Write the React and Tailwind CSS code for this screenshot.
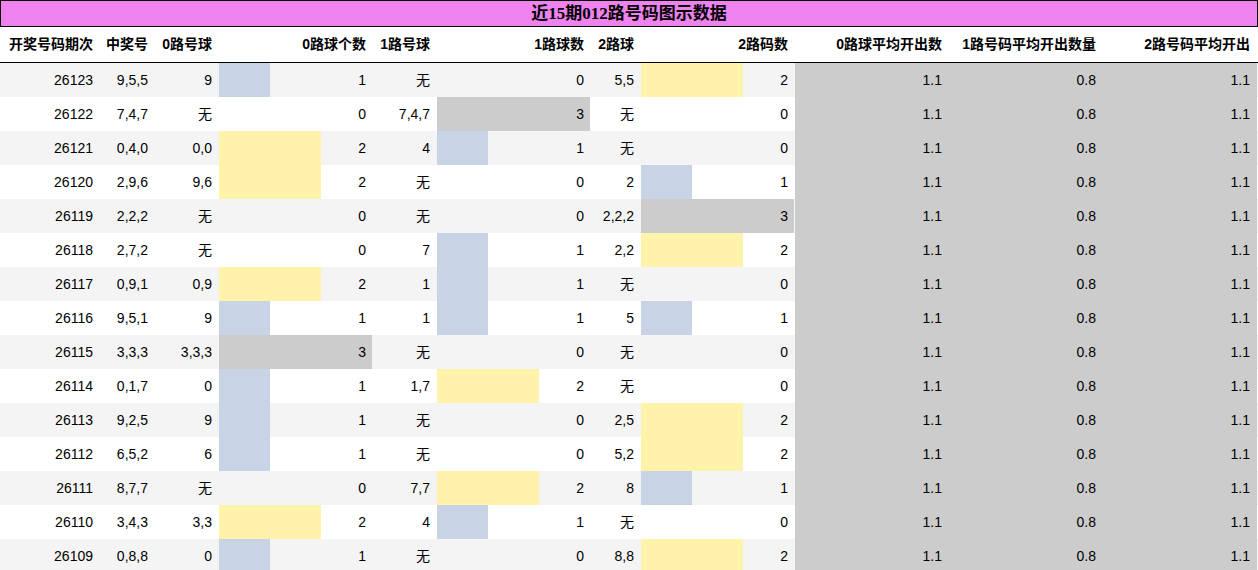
import React from "react";

const rows = [
  ["26123", "9,5,5", "9", 1, "无", 0, "5,5", 2],
  ["26122", "7,4,7", "无", 0, "7,4,7", 3, "无", 0],
  ["26121", "0,4,0", "0,0", 2, "4", 1, "无", 0],
  ["26120", "2,9,6", "9,6", 2, "无", 0, "2", 1],
  ["26119", "2,2,2", "无", 0, "无", 0, "2,2,2", 3],
  ["26118", "2,7,2", "无", 0, "7", 1, "2,2", 2],
  ["26117", "0,9,1", "0,9", 2, "1", 1, "无", 0],
  ["26116", "9,5,1", "9", 1, "1", 1, "5", 1],
  ["26115", "3,3,3", "3,3,3", 3, "无", 0, "无", 0],
  ["26114", "0,1,7", "0", 1, "1,7", 2, "无", 0],
  ["26113", "9,2,5", "9", 1, "无", 0, "2,5", 2],
  ["26112", "6,5,2", "6", 1, "无", 0, "5,2", 2],
  ["26111", "8,7,7", "无", 0, "7,7", 2, "8", 1],
  ["26110", "3,4,3", "3,3", 2, "4", 1, "无", 0],
  ["26109", "0,8,8", "0", 1, "无", 0, "8,8", 2],
];

const headers = [
  "开奖号码期次", "中奖号", "0路号球", "0路球个数", "1路号球", "1路球数",
  "2路球", "2路码数", "0路球平均开出数", "1路号码平均开出数量", "2路号码平均开出",
];

const cols = "grid-cols-[100px_55px_64px_154px_64px_154px_50px_154px_154px_154px_154px]";

const barColor = ["", "bg-[#c9d3e6]", "bg-[#fff2aa]", "bg-[#cccccc]"];

function BarCell({ n }) {
  return (
    <div className="relative h-[34px] flex items-center justify-end pr-[7px]">
      {n > 0 && (
        <div
          className={`absolute left-0 top-0 bottom-0 ${barColor[n]}`}
          style={{ width: n * 51 }}
        />
      )}
      <span className="relative">{n}</span>
    </div>
  );
}

function Cell({ children }) {
  return (
    <div className="h-[34px] flex items-center justify-end pr-[7px]">
      {children}
    </div>
  );
}

export default function App() {
  return (
    <div
      className="w-[1258px] text-[14px] text-black bg-white"
      style={{ fontFamily: '"Liberation Sans", "Noto Sans CJK SC", sans-serif' }}
    >
      <div
        className="h-[27px] bg-[#ee82ee] border border-black flex items-center justify-center font-bold text-[17px]"
        style={{ fontFamily: '"Liberation Serif", "Noto Sans CJK SC", serif' }}
      >
        近15期012路号码图示数据
      </div>
      <div className={`grid ${cols} h-[36px] border-b border-black font-bold`}>
        {headers.map((h) => (
          <div key={h} className="flex items-center justify-end pr-[7px]">
            {h}
          </div>
        ))}
      </div>
      {rows.map((r, i) => (
        <div
          key={r[0]}
          className={`grid ${cols} ${i % 2 === 0 ? "bg-[#f4f4f4]" : "bg-white"}`}
        >
          <Cell>{r[0]}</Cell>
          <Cell>{r[1]}</Cell>
          <Cell>{r[2]}</Cell>
          <BarCell n={r[3]} />
          <Cell>{r[4]}</Cell>
          <BarCell n={r[5]} />
          <Cell>{r[6]}</Cell>
          <BarCell n={r[7]} />
          <div className="bg-[#cccccc]"><Cell>1.1</Cell></div>
          <div className="bg-[#cccccc]"><Cell>0.8</Cell></div>
          <div className="bg-[#cccccc]"><Cell>1.1</Cell></div>
        </div>
      ))}
    </div>
  );
}
